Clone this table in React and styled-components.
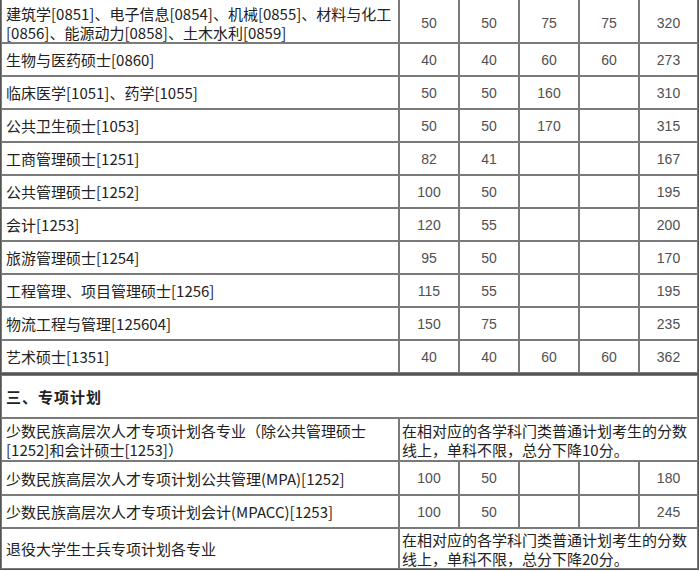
import React from 'react';
import styled, { createGlobalStyle } from 'styled-components';

const GlobalStyle = createGlobalStyle`
  html, body {
    margin: 0;
    padding: 0;
    background: #fff;
    overflow: hidden;
  }
  body {
    font-family: "Noto Sans CJK SC", "Liberation Sans", sans-serif;
    color: #222;
  }
`;

const Sheet = styled.div`
  width: 699px;
  height: 572px;
  overflow: hidden;
`;

const Table = styled.table`
  width: 699px;
  table-layout: fixed;
  border-collapse: separate;
  border-spacing: 0;
  border: 1px solid #555;
  margin-top: ${p => (p.$cut ? '-2px' : '0')};
`;

const Col = styled.col`
  width: ${p => p.$w}px;
`;

const Row = styled.tr`
  height: ${p => p.$h}px;
`;

const Cell = styled.td`
  box-sizing: border-box;
  border: 1px solid #7a7a7a;
  padding: ${p => (p.$top ? `${p.$top}px 4px 0` : '0 4px')};
  vertical-align: middle;
  white-space: nowrap;
  overflow: hidden;
`;

const NameCell = styled(Cell)`
  font-size: 15px;
  line-height: 19px;
  text-align: left;
  color: #222;
`;

const NumCell = styled(Cell)`
  font-family: "Liberation Sans", Arial, sans-serif;
  font-size: 14px;
  text-align: center;
  color: #505050;
`;

const NoteCell = styled(Cell)`
  font-size: 15px;
  line-height: 19px;
  padding: 0 2px;
  text-align: left;
  color: #222;
`;

const SectionCell = styled(Cell)`
  font-size: 15px;
  font-weight: bold;
  text-align: left;
  color: #222;
  letter-spacing: 1px;
`;

const widths = [398, 60, 60, 60, 60, 59];

const Cols = () => (
  <colgroup>
    {widths.map((w, i) => (
      <Col key={i} $w={w} />
    ))}
  </colgroup>
);

const general = [
  { name: ['建筑学[0851]、电子信息[0854]、机械[0855]、材料与化工', '[0856]、能源动力[0858]、土木水利[0859]'], v: ['50', '50', '75', '75', '320'], h: 44, top: 3 },
  { name: ['生物与医药硕士[0860]'], v: ['40', '40', '60', '60', '273'] },
  { name: ['临床医学[1051]、药学[1055]'], v: ['50', '50', '160', '', '310'] },
  { name: ['公共卫生硕士[1053]'], v: ['50', '50', '170', '', '315'] },
  { name: ['工商管理硕士[1251]'], v: ['82', '41', '', '', '167'] },
  { name: ['公共管理硕士[1252]'], v: ['100', '50', '', '', '195'] },
  { name: ['会计[1253]'], v: ['120', '55', '', '', '200'] },
  { name: ['旅游管理硕士[1254]'], v: ['95', '50', '', '', '170'] },
  { name: ['工程管理、项目管理硕士[1256]'], v: ['115', '55', '', '', '195'] },
  { name: ['物流工程与管理[125604]'], v: ['150', '75', '', '', '235'] },
  { name: ['艺术硕士[1351]'], v: ['40', '40', '60', '60', '362'] },
];

const special = [
  {
    name: ['少数民族高层次人才专项计划各专业（除公共管理硕士', '[1252]和会计硕士[1253]）'],
    note: ['在相对应的各学科门类普通计划考生的分数', '线上，单科不限，总分下降10分。'],
    h: 43,
  },
  { name: ['少数民族高层次人才专项计划公共管理(MPA)[1252]'], v: ['100', '50', '', '', '180'], h: 34 },
  { name: ['少数民族高层次人才专项计划会计(MPACC)[1253]'], v: ['100', '50', '', '', '245'], h: 33 },
  {
    name: ['退役大学生士兵专项计划各专业'],
    note: ['在相对应的各学科门类普通计划考生的分数', '线上，单科不限，总分下降20分。'],
    h: 41,
  },
];

const Lines = ({ lines }) =>
  lines.map((l, i) => (
    <React.Fragment key={i}>
      {i > 0 && <br />}
      {l}
    </React.Fragment>
  ));

const DataRow = ({ row }) => (
  <Row $h={row.h || 33}>
    <NameCell $top={row.top}>
      <Lines lines={row.name} />
    </NameCell>
    {row.note ? (
      <NoteCell colSpan={5}>
        <Lines lines={row.note} />
      </NoteCell>
    ) : (
      row.v.map((n, i) => (
        <NumCell key={i} $top={row.top}>
          {n}
        </NumCell>
      ))
    )}
  </Row>
);

export default function App() {
  return (
    <Sheet>
      <GlobalStyle />
      <Table $cut>
        <Cols />
        <tbody>
          {general.map((r, i) => (
            <DataRow key={i} row={r} />
          ))}
        </tbody>
      </Table>
      <Table>
        <Cols />
        <tbody>
          <Row $h={43}>
            <SectionCell colSpan={6}>三、专项计划</SectionCell>
          </Row>
          {special.map((r, i) => (
            <DataRow key={i} row={r} />
          ))}
        </tbody>
      </Table>
    </Sheet>
  );
}
